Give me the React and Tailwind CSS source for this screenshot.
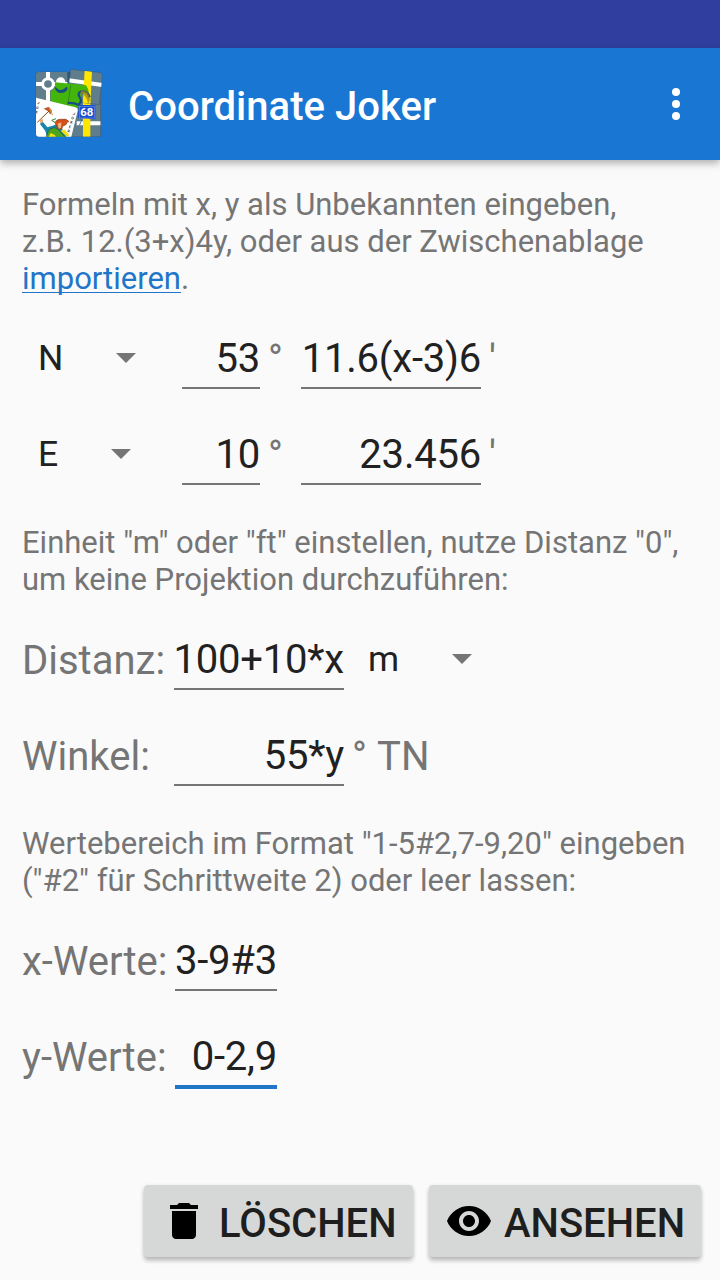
import React from "react";

function Logo() {
  return (
    <svg className="h-[90px] w-[100px] shrink-0" viewBox="0 0 300 270">
      <defs>
        <clipPath id="tile">
          <rect x="48" y="36" width="194" height="194" rx="9" />
        </clipPath>
        <clipPath id="corner">
          <path d="M152 28 L240 38 Q248 40 247 48 L238 134 L142 122 Z" />
        </clipPath>
      </defs>
      <rect x="47" y="35" width="196" height="196" rx="10" fill="#35597f" />
      <g clipPath="url(#tile)">
        <rect x="48" y="36" width="194" height="194" fill="#607d8b" />
        <path d="M142 36 H160 V100 H142 Z" fill="#2d5675" />
        <path d="M84 36 V130 M48 72 H142 M170 190 H242" stroke="#fff" strokeWidth="12" fill="none" />
        <circle cx="122" cy="66" r="14" fill="#fff" />
        <circle cx="84" cy="72" r="16" fill="#607d8b" stroke="#fff" strokeWidth="9" />
        <path d="M189 110 H211 V230 H189 Z" fill="#ffe600" />
      </g>
      <path d="M152 28 L240 38 Q248 40 247 48 L238 134 L142 122 Z" fill="#607d8b" stroke="#35597f" strokeWidth="1.5" />
      <g clipPath="url(#corner)">
        <path d="M145 61 L247 75" stroke="#fff" strokeWidth="12" />
        <path d="M194 30 L216 34 L211 140 L188 140 Z" fill="#ffe600" />
      </g>
      <path d="M105 67 L198 76 Q208 90 206 106 Q193 92 181 99 Q188 116 177 126 L172 154 L92 124 V96 Q100 90 105 82 Z" fill="#43b50b" />
      <path d="M152 77 L143 139" stroke="#318a18" strokeWidth="3" />
      <path d="M104 82 Q107 98 121 99 Q141 99 143 84 L139 80 Q128 94 117 89 Q106 80 104 82 Z" fill="#164e83" />
      <path d="M143 129 Q164 128 174 134 Q187 128 181 115 Q169 99 184 94 Q202 91 209 112" fill="none" stroke="#174f82" strokeWidth="7" />
      <path d="M185 91 Q207 89 210 119 L204 132 Q200 103 180 99 Z" fill="#9b8616" opacity=".75" />
      <g clipPath="url(#tile)">
        <path d="M46 113 L166 142 Q175 145 173 153 L153 234 H44 Z" fill="#fff" />
        <path d="M81 230 L76 213 L60 192 L67 184 L82 202 L98 197 L109 193 L130 211 L140 224 V234 Z" fill="#1684ac" />
        <path d="M78 232 L85 213 Q100 196 115 209 L136 232 Z" fill="#4ba51d" stroke="#31521c" strokeWidth="2" />
        <path d="M86 231 L92 219 L103 224 L109 230 Z M122 212 L133 208 L148 225 L142 232 Z" fill="#f1df19" />
        <path d="M105 188 Q110 176 127 178 Q139 174 147 185 Q139 183 139 193 L128 199 L125 208 L113 205 Z" fill="#d74f16" stroke="#873c15" strokeWidth="2" />
        <path d="M113 191 L124 187 L123 203 L116 206 Z" fill="#f2b47a" />
        <path d="M106 188 L95 181 L108 176" fill="none" stroke="#35883b" strokeWidth="3" />
        <path d="M52 187 L88 152" stroke="#7b4a26" strokeWidth="3" />
        <path d="M73 146 L86 142 L95 152 L91 162 L85 153 Z" fill="#d94d23" stroke="#754015" strokeWidth="1.5" />
        <path d="M87 141 L92 153 L98 166" fill="none" stroke="#d5a12a" strokeWidth="3" />
        <path d="M58 180 L69 177 L69 187 L61 190 Z" fill="#edaa78" />
        <g fill="#333" fontFamily="Roboto, sans-serif" fontSize="11" fontWeight="700">
          <text x="51" y="132" transform="rotate(14 51 132)">J</text>
          <text x="47" y="146" transform="rotate(14 47 146)">O</text>
          <text x="45" y="159" transform="rotate(14 45 159)">K</text>
          <text x="158" y="164" transform="rotate(14 158 164)">J</text>
          <text x="153" y="177" transform="rotate(14 153 177)">O</text>
          <text x="150" y="190" transform="rotate(14 150 190)">K</text>
          <text x="146" y="203" transform="rotate(14 146 203)">E</text>
          <text x="142" y="216" transform="rotate(14 142 216)">R</text>
        </g>
      </g>
      <path d="M181 173 Q188 184 178 196" fill="none" stroke="#43778d" strokeWidth="3" />
      <path d="M176 135 H226 V178 L174 174 Z" fill="#1c4dce" />
      <rect x="178" y="139" width="45" height="35" fill="#1c4dce" stroke="#7fa3ec" strokeWidth="1.5" />
      <text x="200" y="169" textAnchor="middle" fontFamily="Roboto, sans-serif" fontSize="34" fontWeight="700" fill="#fff">68</text>
    </svg>
  );
}

function Hint({ children, className }) {
  return <p className={`text-[31px] leading-[37px] whitespace-nowrap text-[#757575] ${className}`}>{children}</p>;
}

function Row({ children }) {
  return <div className="flex h-24 items-start pt-6">{children}</div>;
}

function Label({ children, className = "" }) {
  return <span className={`shrink-0 pt-px text-[40px] leading-[47px] whitespace-nowrap text-[#757575] ${className}`}>{children}</span>;
}

function Field({ children, className, active = false }) {
  return (
    <div
      className={`flex shrink-0 justify-end text-[40px] leading-[47px] tracking-[-0.22px] whitespace-nowrap text-[#212121] ${
        active ? "h-[56px] border-b-4 border-[#1f76c8]" : "h-[54px] border-b-2 border-[#757575]"
      } ${className}`}
    >
      {children}
    </div>
  );
}

function Spinner({ value, className, gap }) {
  return (
    <div className={`flex h-[46px] shrink-0 items-center text-[35.5px] leading-[42px] text-[#212121] ${className}`}>
      <span className={gap}>{value}</span>
      <svg className="h-[10px] w-5 shrink-0" viewBox="0 0 20 10">
        <path d="M0 0H20L10 10Z" fill="#757575" />
      </svg>
    </div>
  );
}

function ActionButton({ icon, children, className }) {
  return (
    <button
      className={`flex h-[72px] items-start rounded-[4px] bg-[#d6d8d7] pt-[15px] text-[40px] leading-[47px] font-medium text-[#1e1e1e] shadow-[0_4px_4px_rgba(0,0,0,0.2),0_1px_4px_rgba(0,0,0,0.12)] ${className}`}
    >
      {icon}
      {children}
    </button>
  );
}

export default function App() {
  return (
    <div className="flex h-[1280px] w-[720px] flex-col overflow-hidden bg-[#fafafa] font-['Roboto',sans-serif]">
      <div className="h-12 shrink-0 bg-[#303f9f]" />
      <header className="flex h-28 shrink-0 items-start bg-[#1976d2] pl-5 shadow-[0_3px_8px_rgba(0,0,0,0.32)]">
        <div className="pt-3">
          <Logo />
        </div>
        <h1 className="grow pt-[35px] pl-2 text-[40px] leading-[47px] font-medium tracking-[0.05px] whitespace-nowrap text-white">
          Coordinate Joker
        </h1>
        <svg className="mt-8 mr-5 h-12 w-12" viewBox="0 0 48 48" fill="#fff">
          <circle cx="24" cy="12" r="4" />
          <circle cx="24" cy="24" r="4" />
          <circle cx="24" cy="36" r="4" />
        </svg>
      </header>

      <main className="flex h-[945px] shrink-0 flex-col pl-[22px]">
        <Hint className="mt-[26px] h-[125px]">
          Formeln mit x, y als Unbekannten eingeben,
          <br />
          z.B. 12.(3+x)4y, oder aus der Zwischenablage
          <br />
          <a className="text-[#1f76c8] underline decoration-1 underline-offset-[3px] [text-decoration-skip-ink:none]">importieren</a>.
        </Hint>

        <Row>
          <Spinner value="N" className="w-[160px] pl-4" gap="w-[78px]" />
          <Field className="w-[78px]">53</Field>
          <Label className="w-[41px] pl-2">°</Label>
          <Field className="w-[180px]">11.6(x-3)6</Field>
          <Label className="pl-2">'</Label>
        </Row>
        <Row>
          <Spinner value="E" className="w-[160px] pl-4" gap="w-[73px]" />
          <Field className="w-[78px]">10</Field>
          <Label className="w-[41px] pl-2">°</Label>
          <Field className="w-[180px]">23.456</Field>
          <Label className="pl-2">'</Label>
        </Row>

        <Hint className="mt-[21px] h-[88px]">
          Einheit "m" oder "ft" einstellen, nutze Distanz "0",
          <br />
          um keine Projektion durchzuführen:
        </Hint>

        <Row>
          <Label className="w-[152px]">Distanz:</Label>
          <Field className="w-[170px]">100+10*x</Field>
          <Spinner value="m" className="pl-6" gap="w-[84px]" />
        </Row>
        <Row>
          <Label className="w-[152px]">Winkel:</Label>
          <Field className="w-[170px]">55*y</Field>
          <Label className="pl-2 [word-spacing:1px]">° TN</Label>
        </Row>

        <Hint className="mt-[21px] h-[88px]">
          Wertebereich im Format "1-5#2,7-9,20" eingeben
          <br />
          ("#2" für Schrittweite 2) oder leer lassen:
        </Hint>

        <Row>
          <Label className="w-[153px]">x-Werte:</Label>
          <Field className="w-[102px]">3-9#3</Field>
        </Row>
        <Row>
          <Label className="w-[153px]">y-Werte:</Label>
          <Field className="w-[102px]" active>
            0-2,9
          </Field>
        </Row>
      </main>

      <footer className="flex shrink-0 gap-4 pt-20 pl-36">
        <ActionButton
          className="w-[269px] pl-4"
          icon={
            <svg className="mt-[-3px] mr-[11px] h-12 w-12 shrink-0" viewBox="0 0 48 48">
              <path d="M12 38c0 2.200 1.800 4 4 4h16c2.200 0 4-1.800 4-4V14H12v24zM38 8h-7l-2-2H19l-2 2h-7v4h28V8z" />
            </svg>
          }
        >
          LÖSCHEN
        </ActionButton>
        <ActionButton
          className="w-[272px] pl-4"
          icon={
            <svg className="mt-[-3px] mr-[11px] h-12 w-12 shrink-0" viewBox="0 0 48 48">
              <path d="M24 9C14 9 5.460 15.220 2 24c3.460 8.780 12 15 22 15s18.540-6.220 22-15C42.540 15.220 34.010 9 24 9zm0 25c-5.520 0-10-4.480-10-10s4.480-10 10-10 10 4.480 10 10-4.480 10-10 10zm0-16c-3.310 0-6 2.690-6 6s2.690 6 6 6 6-2.690 6-6-2.690-6-6-6z" />
            </svg>
          }
        >
          ANSEHEN
        </ActionButton>
      </footer>
    </div>
  );
}
